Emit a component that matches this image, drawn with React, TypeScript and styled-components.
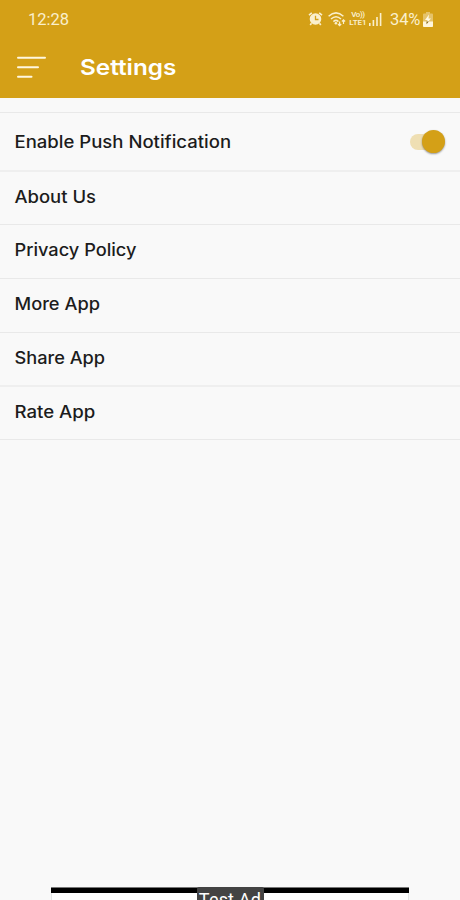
import React from "react";
import styled, { createGlobalStyle } from "styled-components";

const GlobalStyle = createGlobalStyle`
  * { box-sizing: border-box; }
  html, body { margin: 0; background: #f9f9f9; overflow: hidden; }
`;

const Screen = styled.div`
  width: 460px;
  height: 900px;
  display: flex;
  flex-direction: column;
  overflow: hidden;
  background: #f9f9f9;
  font-family: Inter, sans-serif;
`;

const Header = styled.header`
  height: 98px;
  flex: none;
  background: #d4a017;
`;

const StatusBar = styled.div`
  height: 38px;
  padding: 0 27px 0 28px;
  display: flex;
  align-items: center;
  justify-content: space-between;
  color: #faefcd;
  font: 400 16.5px/39px Roboto, sans-serif;
`;

const StatusIcons = styled.div`
  display: flex;
  align-items: center;
  height: 38px;
`;

const Glyph = styled.svg<{ $gap?: number }>`
  display: block;
  flex: none;
  margin-right: ${(p) => p.$gap ?? 0}px;
`;

const Network = styled.div`
  width: 18px;
  margin-right: 2px;
  display: flex;
  flex-direction: column;
  align-items: center;
  white-space: nowrap;
  font: 600 8px/8.5px Roboto, sans-serif;
`;

const Carrier = styled.span<{ $spacing: number }>`
  height: 8.5px;
  letter-spacing: ${(p) => p.$spacing}px;
`;

const Battery = styled.span`
  width: 31px;
  margin-right: 2px;
  white-space: nowrap;
  letter-spacing: -0.1px;
`;

const Toolbar = styled.div`
  height: 60px;
  padding-left: 17px;
  display: flex;
  align-items: center;
`;

const MenuButton = styled.button`
  width: 63px;
  height: 24px;
  padding: 0;
  border: 0;
  background: none;
`;

const Title = styled.h1`
  margin: 0 0 2px;
  color: #fff;
  font-size: 22px;
  font-weight: 600;
  line-height: 58px;
  transform: scaleX(1.105);
  transform-origin: left;
`;

const List = styled.ul`
  margin: 14px 0 0;
  padding: 0;
  list-style: none;
  border-top: 1px solid #e9e9e9;
`;

const Row = styled.li<{ $height: number; $lift: number; $line: number }>`
  height: ${(p) => p.$height}px;
  padding: 0 15px ${(p) => p.$lift}px 14px;
  display: flex;
  align-items: center;
  justify-content: space-between;
  border-bottom: ${(p) => p.$line}px solid ${(p) => (p.$line > 1 ? "#efefef" : "#e9e9e9")};
`;

const Label = styled.span<{ $stretch: number }>`
  color: #1c1c1c;
  font-size: 17px;
  font-weight: 500;
  line-height: 24px;
  white-space: nowrap;
  transform: translateX(0.5px) scaleX(${(p) => p.$stretch});
  transform-origin: left;
`;

const Track = styled.div`
  width: 35px;
  height: 16px;
  display: flex;
  align-items: center;
  justify-content: flex-end;
  border-radius: 8px;
  background: linear-gradient(#efdfb3, #efdfb3) no-repeat 0 0 / 28px 16px;
`;

const Thumb = styled.div`
  width: 23px;
  height: 23px;
  flex: none;
  border-radius: 50%;
  background: #d4a017;
  box-shadow: 0 1px 2px rgba(0, 0, 0, 0.4);
`;

const AdBanner = styled.div`
  width: 358px;
  height: 13px;
  margin: auto auto 0 51px;
  display: flex;
  flex-direction: column;
  align-items: center;
`;

const AdStripe = styled.div`
  width: 358px;
  height: 6px;
  flex: none;
  border-top: 1px solid #777;
  background: #000;
`;

const AdBody = styled.div`
  width: 358px;
  height: 7px;
  flex: none;
  display: flex;
  justify-content: center;
  border: solid #e4e7e7;
  border-width: 0 1px;
  background: #fff;
`;

const AdTag = styled.div`
  width: 67px;
  height: 26px;
  margin-top: -6px;
  flex: none;
  border-radius: 2px 2px 0 0;
  background: #434343;
  color: #fff;
  text-align: center;
  white-space: nowrap;
  font: 400 18px/26px Roboto, sans-serif;
  letter-spacing: 0.2px;
`;

const rows = [
  { text: "Enable Push Notification", height: 59, lift: 0, line: 2, stretch: 1.09, toggle: true },
  { text: "About Us", height: 53, lift: 2, line: 1, stretch: 1.085 },
  { text: "Privacy Policy", height: 54, lift: 3, line: 1, stretch: 1.07 },
  { text: "More App", height: 54, lift: 4, line: 1, stretch: 1.073 },
  { text: "Share App", height: 54, lift: 2, line: 2, stretch: 1.068 },
  { text: "Rate App", height: 53, lift: 2, line: 1, stretch: 1.095 },
];

const AlarmIcon = () => (
  <Glyph $gap={5} width="15" height="16" viewBox="0 0 15 16" fill="none" stroke="#faefcd">
    <circle cx="7.5" cy="8" r="4.9" fill="#faefcd" strokeWidth="1.8" />
    <path d="M7.5 4.8v3.7h3" stroke="#d4a017" strokeWidth="1.3" />
    <path d="M1 4.2 3.8 1.8M14 4.2 11.2 1.8M3.5 12.2 2.2 14M11.5 12.2l1.3 1.8" strokeWidth="1.6" />
  </Glyph>
);

const WifiIcon = () => (
  <Glyph $gap={3} width="18" height="16" viewBox="0 0 18 16" fill="none" stroke="#faefcd" strokeWidth="1.5">
    <path d="M.6 5.2Q8 -1.5 15.4 5.2M3 8Q8 3.4 13 8M5.4 10.6Q8 8.2 10.4 10.6" />
    <circle cx="7.9" cy="12.3" r="1.3" fill="#faefcd" stroke="none" />
    <path d="M11.6 10.5v4M10 13l1.6 1.6 1.6-1.6M15.5 13V9M13.9 10.5l1.6-1.6 1.6 1.6" strokeWidth="1.2" />
  </Glyph>
);

const SignalIcon = () => (
  <Glyph $gap={8} width="13" height="13" viewBox="0 0 13 13" fill="#faefcd">
    <path d="M0 10h1.6v3H0zM3.6 7h1.6v6H3.6zM7.2 4h1.6v9H7.2zM10.8 0h1.6v13h-1.6z" />
  </Glyph>
);

const ChargeIcon = () => (
  <Glyph width="10" height="15" viewBox="0 0 10 15">
    <path d="M3 0h4v1.5h2q1 0 1 1V14q0 1-1 1H1q-1 0-1-1V2.5q0-1 1-1h2z" fill="#e5c36a" />
    <path d="M0 9.5h10V14q0 1-1 1H1q-1 0-1-1z" fill="#fff6dc" />
    <path d="M6 2.5 2 8h2.5L3.5 11.5 8 6.5H5.5z" fill="#fffbea" />
    <path d="M3.5 9.5h2.3L3.5 12.3z" fill="#80600e" />
  </Glyph>
);

export default function App() {
  return (
    <Screen>
      <GlobalStyle />
      <Header>
        <StatusBar>
          <span>12:28</span>
          <StatusIcons>
            <AlarmIcon />
            <WifiIcon />
            <Network>
              <Carrier $spacing={-0.4}>Vo))</Carrier>
              <Carrier $spacing={0}>LTE1</Carrier>
            </Network>
            <SignalIcon />
            <Battery>34%</Battery>
            <ChargeIcon />
          </StatusIcons>
        </StatusBar>
        <Toolbar>
          <MenuButton aria-label="Menu">
            <Glyph width="29" height="24" viewBox="0 0 29 24" stroke="#fff7df" strokeWidth="2" strokeLinecap="round">
              <path d="M1 1.8h27M1 11.2h20M1 20.7h13.5" />
            </Glyph>
          </MenuButton>
          <Title>Settings</Title>
        </Toolbar>
      </Header>
      <List>
        {rows.map((row) => (
          <Row key={row.text} $height={row.height} $lift={row.lift} $line={row.line}>
            <Label $stretch={row.stretch}>{row.text}</Label>
            {row.toggle && (
              <Track role="switch" aria-checked="true">
                <Thumb />
              </Track>
            )}
          </Row>
        ))}
      </List>
      <AdBanner>
        <AdStripe />
        <AdBody>
          <AdTag>Test Ad</AdTag>
        </AdBody>
      </AdBanner>
    </Screen>
  );
}
